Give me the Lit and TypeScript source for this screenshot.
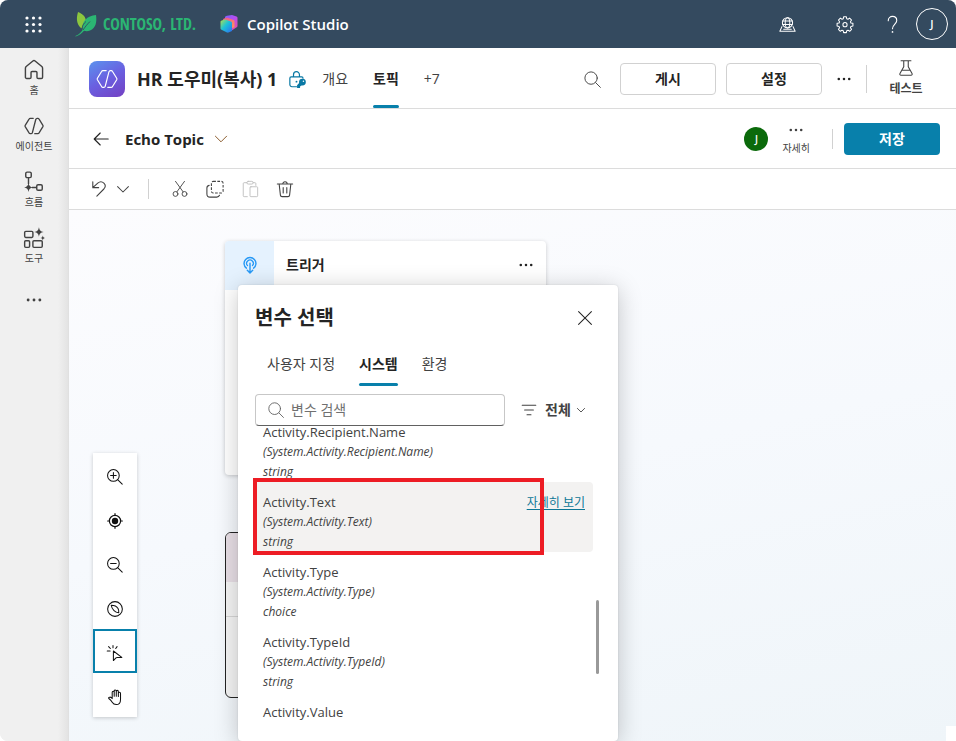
import { LitElement, html, css, svg } from "lit";
import { customElement, state } from "lit/decorators.js";
import { classMap } from "lit/directives/class-map.js";

const icon = (size: number, body: unknown) =>
  html`<svg width=${size} height=${size} viewBox="0 0 20 20" fill="none" stroke="currentColor" stroke-width="1" stroke-linecap="round" stroke-linejoin="round" aria-hidden="true">${body}</svg>`;

const dots = svg`<g fill="currentColor" stroke="none"><circle cx="3.500" cy="10" r="1.600"/><circle cx="10" cy="10" r="1.600"/><circle cx="16.500" cy="10" r="1.600"/></g>`;
const search = svg`<circle cx="8.5" cy="8.5" r="6.500"/><path d="M13.300 13.300l5 5"/>`;
const hexCode = svg`<path d="M9.3 3H6.6c-.5 0-.9.3-1.1.7L2 9.4c-.2.4-.2.8 0 1.2l3.5 5.7c.2.4.6.7 1.1.7h.7c.6 0 1-.3 1.2-.9l3.1-12c.2-.7.7-1.1 1.3-1.1h.6c.5 0 .9.3 1.1.7l3.5 5.7c.2.4.2.8 0 1.2l-3.5 5.7c-.2.4-.6.7-1.1.7h-2.8"/>`;

const icons = {
  home: svg`<path stroke-width="1.300" d="M2.2 8.3c0-.6.3-1.1.7-1.5l6.100-5c.6-.5 1.400-.5 2 0l6.100 5c.4.4.7.900.7 1.500v8.200c0 .7-.5 1.200-1.200 1.200h-2.700c-.7 0-1.200-.5-1.200-1.200v-4.200c0-.5-.4-.900-.900-.900H8.200c-.5 0-.900.4-.900.900v4.200c0 .7-.5 1.200-1.200 1.200H3.400c-.7 0-1.200-.5-1.200-1.200z"/>`,
  agent: svg`<g stroke-width="1.200">${hexCode}</g>`,
  flow: svg`<g stroke-width="1.300"><rect x="2.500" y="1" width="5" height="5" rx="1.200"/><rect x="12.500" y="12.500" width="5" height="5" rx="1.200"/><path d="M5 6.500v5M8.500 15h3.500"/></g><path fill="currentColor" stroke="none" d="M5 11c.5 2.600 1.400 3.500 4 4-2.600.5-3.500 1.400-4 4-.5-2.600-1.400-3.500-4-4 2.600-.5 3.500-1.400 4-4z"/>`,
  tools: svg`<g stroke-width="1.300"><rect x="1.500" y="4" width="7.500" height="5.500" rx="1"/><rect x="1.500" y="12.500" width="4.500" height="6" rx="1"/><rect x="9" y="12.500" width="8.500" height="6" rx="1"/></g><g fill="currentColor" stroke="none"><path d="M14.500.2c.6 3 1.300 3.700 4.300 4.300-3 .6-3.700 1.300-4.300 4.300-.6-3-1.300-3.700-4.300-4.300 3-.6 3.700-1.300 4.300-4.300z"/><path d="M18 7.800c.3 1.500.7 1.900 2.200 2.200-1.500.3-1.900.7-2.200 2.200-.3-1.500-.7-1.900-2.200-2.200 1.500-.3 1.900-.7 2.200-2.200z"/></g>`,
  back: svg`<path stroke-width="1.400" d="M19 10H1.500M9 2.500L1.500 10 9 17.500"/>`,
  undo: svg`<path stroke-width="1.200" d="M2 2v6.500h6.500M2.300 8.200L7.500 3.500c2-1.700 5-1.700 6.800 0s1.800 4.500 0 6.500L6.500 18"/>`,
  cut: svg`<circle cx="5" cy="15.500" r="2.700"/><circle cx="15" cy="15.500" r="2.700"/><path d="M5 1.500l8.500 11.700M15 1.500L6.500 13.200"/>`,
  copy: svg`<path stroke-width="1.200" stroke-dasharray="3 1.600" stroke-linecap="butt" d="M8 1.500h9a2 2 0 0 1 2 2v9a2 2 0 0 1-2 2H8a2 2 0 0 1-2-2v-9a2 2 0 0 1 2-2z"/><path stroke-width="1.200" d="M3.500 6C2 6.300 1 7.200 1 9v6.500c0 2 1.200 3.500 3.500 3.500H12c1.500 0 2.500-.8 3-2"/>`,
  paste: svg`<path d="M6.500 3H3.500a1 1 0 0 0-1 1v13.500a1 1 0 0 0 1 1H7M13.500 3h2a1 1 0 0 1 1 1v2"/><rect x="6.500" y="1.500" width="7" height="3" rx="1.500"/><rect x="10" y="7.500" width="8.500" height="11" rx="1"/>`,
  trash: svg`<path stroke-width="1.200" d="M1.500 4.500h17M7.500 4.500c0-3.500 5-3.500 5 0M3.500 4.500l1.400 12.300c.1 1 .8 1.700 1.800 1.700h6.600c1 0 1.700-.7 1.800-1.700L16.500 4.500M8 8.500v6M12 8.500v6"/>`,
  close: svg`<path stroke-width="1.300" d="M2 2l16 16M18 2L2 18"/>`,
  filter: svg`<path stroke-width="1.300" d="M1.500 4h17M4.500 10h11M7.500 16h5"/>`,
  flask: svg`<path stroke-width="1.200" d="M4.500 2h11M7.500 2v6.500L3.300 16.200c-.5 1 .1 1.800 1.100 1.800h11.200c1 0 1.600-.8 1.100-1.800L12.500 8.500V2M5.700 12.500h8.600"/>`,
  globe: svg`<g stroke-width="1.200"><circle cx="10" cy="8" r="6"/><ellipse cx="10" cy="8" rx="2.700" ry="6"/><path d="M4.400 6h11.200M4.400 10h11.200M3.500 12.500L1 18h18l-2.500-5.500M5.500 15.500h9"/></g>`,
  gear: svg`<path stroke-width="1.300" d="M8.300 1h3.400l.5 2.500 1.500.6 2.100-1.400 2.400 2.400-1.400 2.100.6 1.500 2.500.5v3.400l-2.500.5-.6 1.500 1.400 2.100-2.400 2.400-2.100-1.400-1.500.6-.5 2.500H8.300l-.5-2.500-1.500-.6-2.100 1.400-2.400-2.400 1.400-2.100-.6-1.500-2.500-.5V9.200l2.500-.5.6-1.500-1.400-2.100 2.400-2.400 2.100 1.400 1.500-.6z"/><circle cx="10" cy="10.800" r="2.600" stroke-width="1.300"/>`,
  help: svg`<path stroke-width="1.300" d="M5 5.500C5 2.500 7.200.5 10 .5s5 2 5 4.800c0 4-5 4.500-5 9.700"/><circle cx="10" cy="18.700" r="1" fill="currentColor" stroke="none"/>`,
  zoomIn: svg`<g stroke-width="1.300"><circle cx="8" cy="8" r="7.300"/><path d="M13.300 13.300l5.700 5.700M4.500 8h7M8 4.500v7"/></g>`,
  zoomOut: svg`<g stroke-width="1.300"><circle cx="8" cy="8" r="7.300"/><path d="M13.300 13.300l5.700 5.700M4.500 8h7"/></g>`,
  target: svg`<circle cx="10" cy="10" r="7" stroke-width="1.500"/><circle cx="10" cy="10" r="4" fill="currentColor" stroke="none"/><path stroke-width="1.500" d="M10 .8v2M10 17.200v2M.8 10h2M17.200 10h2"/>`,
  compass: svg`<circle cx="10" cy="10" r="9.200" stroke-width="1.300"/><path stroke-width="1.300" d="M5.300 5.300c3.700 0 7 1.500 8.500 4 .9 1.500 1.100 3.200.9 5.400-2.300-.2-4.200-.9-5.900-2.700-2-2-3.200-4.200-3.500-6.700z"/>`,
  click: svg`<path stroke-width="1.300" d="M8 7.500v12l3.200-3.400 1.500-.6h5.800zM7.500 .5v3M2 2l2.200 2.400M.3 7.500h3.600M12.600 2l-1.700 2.400"/>`,
  hand: svg`<path stroke-width="1.300" d="M6.500 12V4.200c0-1.700 2.500-1.700 2.500 0V9M9 9V2.500c0-1.700 2.600-1.700 2.600 0V9M11.600 9V3c0-1.700 2.600-1.700 2.600 0v6.500M14.200 9.500V5.300c0-1.700 2.700-1.700 2.700 0V13c0 3.700-2 6.500-5.400 6.500-2.400 0-3.800-.9-5-3-1-1.700-2.200-3-3.900-4.300-.9-.7-.7-1.800.5-2 1.500-.3 2.500.300 3.400 1.800"/>`,
  trigger: svg`<path stroke-width="1.600" d="M6 13.500A6.600 6.600 0 1 1 14 13.500"/><path stroke-width="1.400" d="M7.300 10.700A3.700 3.700 0 1 1 12.700 10.700"/><path stroke-width="1.600" d="M10 8v10.500M7 15.800L10 18.800l3-3"/>`,
  lock: svg`<g stroke-width="1.400"><path d="M9 18.500H3.500a2.500 2.500 0 0 1-2.500-2.500V8.500A1.500 1.500 0 0 1 2.500 7h12.500A1.500 1.500 0 0 1 16.500 8.500M5.300 7V4.300a3.500 3.500 0 0 1 7 0V7"/></g><g fill="currentColor" stroke="none"><circle cx="8.800" cy="12.500" r="1.100"/><circle cx="15.800" cy="13" r="4"/><path d="M13 13l3 3-3 2.300v1.700H9.500v-3.300z"/></g><circle cx="17" cy="12" r=".9" fill="#fff" stroke="none"/>`,
};

const variables: { name: string; type?: string }[] = [
  { name: "Activity.Recipient.Name", type: "string" },
  { name: "Activity.Text", type: "string" },
  { name: "Activity.Type", type: "choice" },
  { name: "Activity.TypeId", type: "string" },
  { name: "Activity.Value" },
];

const base = css`
  * { box-sizing: border-box; }
  svg { display: block; flex: none; overflow: visible; }
  button { font: inherit; color: inherit; background: none; border: 0; padding: 0; margin: 0; cursor: pointer; }
`;

@customElement("variable-picker")
class VariablePicker extends LitElement {
  @state() private tab = "시스템";

  static styles = [base, css`
    :host { display: flex; flex-direction: column; background: #fff; border-radius: 4px; padding: 17px 17px 19px; box-shadow: 0 4px 24px rgba(0, 0, 0, .22), 0 0 2px rgba(0, 0, 0, .12); }
    .head { display: flex; align-items: center; justify-content: space-between; height: 32px; }
    h2 { margin: 0; font-size: 20px; line-height: 32px; font-weight: 700; color: #242424; }
    .close { padding: 8px; }
    .tabs { display: flex; margin-top: 8px; height: 44px; }
    .tab { position: relative; padding: 0 12px; color: #424242; line-height: 44px; }
    .tab.on { font-weight: 700; color: #242424; }
    .tab.on::after { content: ""; position: absolute; left: 12px; right: 12px; bottom: 0; height: 3px; border-radius: 2px; background: #0880ab; }
    .row { display: flex; align-items: center; margin-top: 8px; }
    .search { display: flex; align-items: center; gap: 6px; width: 250px; height: 32px; padding: 0 11px; border: 1px solid #c7c7c7; border-bottom-color: #616161; border-radius: 4px; color: #616161; }
    input { flex: 1; min-width: 0; border: 0; outline: 0; padding: 0; background: none; font: inherit; color: inherit; }
    input::placeholder { color: #707070; opacity: 1; }
    .filter { display: flex; align-items: center; gap: 8px; margin-left: 16px; font-weight: 700; color: #424242; }
    .filter span { margin-right: -2px; }
    .list { flex: 1; min-height: 0; margin-top: 1px; overflow-y: auto; scrollbar-width: none; }
    .item { position: relative; width: 338px; height: 70px; padding: 10px 8px 0; border-radius: 4px; color: #424242; }
    .item.on { background: #f3f2f1; }
    .pick { display: block; width: 100%; text-align: left; font-size: 13px; line-height: 20px; }
    .pick span, .pick em { display: block; }
    .pick em { font-size: 12px; }
    .more { position: absolute; right: 8px; top: 10px; font-size: 12px; line-height: 22px; color: #0c7796; text-underline-offset: 2px; }
    .thumb { position: absolute; right: 19px; top: 315px; width: 3px; height: 74px; border-radius: 2px; background: #999; }
    .mark { position: absolute; left: 15px; top: 193px; width: 291px; height: 77px; border: 4px solid #ed1c24; pointer-events: none; }
  `];

  firstUpdated() {
    this.renderRoot.querySelector(".list")!.scrollTop = 15;
  }

  render() {
    return html`
      <div class="head"><h2>변수 선택</h2><button class="close" aria-label="닫기">${icon(16, icons.close)}</button></div>
      <div class="tabs" role="tablist">
        ${["사용자 지정", "시스템", "환경"].map((t) => html`<button role="tab" aria-selected=${t === this.tab} class=${classMap({ tab: true, on: t === this.tab })} @click=${() => (this.tab = t)}>${t}</button>`)}
      </div>
      <div class="row">
        <label class="search">${icon(18, search)}<input type="text" aria-label="변수 검색" placeholder="변수 검색"></label>
        <button class="filter">${icon(16, icons.filter)}<span>전체</span>${icon(8, svg`<path stroke-width="2.200" d="M1 6l9 9 9-9"/>`)}</button>
      </div>
      <div class="list">
        ${variables.map((v) => {
          const on = v.name === "Activity.Text";
          return html`<div class=${classMap({ item: true, on })}>
            <button class="pick"><span>${v.name}</span>${v.type ? html`<em>(System.${v.name})</em><em>${v.type}</em>` : ""}</button>
            ${on ? html`<a class="more" href="#">자세히 보기</a>` : ""}
          </div>`;
        })}
      </div>
      <div class="thumb"></div>
      <div class="mark"></div>`;
  }
}

@customElement("app-root")
class AppRoot extends LitElement {
  static styles = [base, css`
    :host { display: flex; flex-direction: column; height: 100vh; min-height: 600px; overflow: hidden; background: #f0f0f0; color: #242424; font: 14px/20px "Open Sans", "Noto Sans CJK KR", sans-serif; border-radius: 8px 8px 0 8px; }
    .top { display: flex; align-items: center; height: 48px; padding: 0 8px 0 25px; background: #344a5f; color: #fff; flex: none; }
    .brand { display: flex; align-items: center; gap: 6px; margin-left: 33px; width: 120px; color: #2bb673; font: 700 16px/20px "Liberation Sans Narrow", "Open Sans Condensed", "Roboto Condensed", "Lato", sans-serif; white-space: nowrap; }
    .product { display: flex; align-items: center; gap: 9px; margin-left: 25px; font-size: 15px; font-weight: 600; white-space: nowrap; }
    .tray { display: flex; align-items: center; margin-left: auto; }
    .tray button { display: grid; place-items: center; width: 40px; height: 40px; }
    .tray .gear { margin-left: 18px; }
    .tray .help { margin-left: 7px; }
    .tray .me { width: 32px; height: 32px; margin-left: 4px; border: 1px solid #fff; border-radius: 50%; font-size: 11px; font-weight: 600; }
    .body { display: flex; flex: 1; min-height: 0; }
    nav { width: 68px; flex: none; padding-top: 5px; color: #424242; background: linear-gradient(90deg, #f0f0f0 58px, #e3e3e3); }
    nav button { display: flex; flex-direction: column; align-items: center; width: 68px; height: 56px; padding-top: 5px; font-size: 10px; line-height: 16px; }
    nav button .ic { display: grid; place-items: center; height: 24px; }
    nav .overflow { padding-top: 11px; }
    .main { display: flex; flex-direction: column; flex: 1; min-width: 0; background: #fff; border-left: 1px solid #e0e0e0; }
    .bar { display: flex; align-items: center; border-bottom: 1px solid #dcdcdc; flex: none; }
    .b1 { height: 61px; padding: 2px 27px 0 20px; }
    .logo { display: grid; place-items: center; width: 36px; height: 36px; border-radius: 8px; color: #fff; background: linear-gradient(150deg, #5b93ee, #6a5fe0 50%, #7440c2); }
    h1 { margin: 0 12px; font-size: 18px; line-height: 28px; font-weight: 700; white-space: nowrap; }
    .lock { color: #0878a4; }
    .tab { position: relative; height: 58px; margin-left: 25px; line-height: 58px; color: #424242; white-space: nowrap; }
    .lock + .tab { margin-left: 16px; }
    .tab.on { font-weight: 700; color: #242424; }
    .tab.on::after { content: ""; position: absolute; left: 0; right: 0; bottom: 0; height: 3px; border-radius: 2px; background: #0880ab; }
    .push { margin-left: auto; }
    .out { width: 96px; height: 32px; margin-left: 10px; border: 1px solid #d1d1d1; border-radius: 4px; font-weight: 700; }
    .find { margin-right: 8px; color: #424242; }
    .dots { margin-left: 14px; }
    .rule { width: 1px; height: 28px; margin-left: 14px; background: #d1d1d1; }
    .test { display: flex; flex-direction: column; align-items: center; gap: 2px; width: 46px; margin-left: 16px; font-size: 12px; line-height: 20px; font-weight: 600; color: #424242; }
    .b2 { height: 60px; padding: 0 16px 0 24px; }
    .name { display: flex; align-items: center; gap: 10px; margin-left: 16px; font-size: 15px; font-weight: 700; white-space: nowrap; }
    .name svg { color: #8a5a2c; }
    .badge { display: grid; place-items: center; width: 24px; height: 24px; border-radius: 50%; background: #0b6a0b; color: #fff; font-size: 10px; font-weight: 600; }
    .detail { display: flex; flex-direction: column; align-items: center; gap: 2px; margin: 0 22px 0 14px; font-size: 10px; line-height: 16px; color: #424242; }
    .b2 .rule { height: 20px; margin: 0 11px 0 0; }
    .save { width: 96px; height: 32px; border-radius: 4px; background: #0880ab; color: #fff; font-weight: 700; }
    .b3 { height: 41px; padding: 0 24px 0 22px; color: #424242; }
    .b3 .rule { height: 20px; margin: 0 22px 0 19px; }
    .b3 .chev { margin-left: 8px; }
    .b3 .tool { margin-right: 17px; }
    .b3 .off { color: #bdbdbd; }
    .canvas { position: relative; flex: 1; min-height: 0; overflow: hidden; background: linear-gradient(168deg, #fcfcfe, #f6f9fd 50%, #eff5f9); }
    .node { position: absolute; left: 156px; width: 321px; background: #fff; border-radius: 4px; overflow: hidden; }
    .trigger { top: 31px; height: 234px; box-shadow: 0 1px 4px rgba(0, 0, 0, .2); }
    .nhead { display: flex; align-items: center; height: 49px; padding-right: 12px; border-bottom: 1px solid #e0e0e0; font-weight: 700; }
    .nicon { display: grid; place-items: center; width: 49px; height: 49px; margin-right: 12px; background: #e5f2fe; color: #2899f5; }
    .ask { top: 322px; height: 166px; border: 1px solid #242424; background: #f5f5f5; border-radius: 6px; }
    .ask .nhead { background: #e8dfe6; border: 0; }
    .sub { height: 35px; border-bottom: 1px solid #d6d6d6; }
    .tools { position: absolute; left: 24px; bottom: 24px; width: 44px; display: flex; flex-direction: column; background: #fff; box-shadow: 0 1px 4px rgba(0, 0, 0, .2); color: #111; }
    .tools button { display: grid; place-items: center; height: 44px; padding-top: 4px; }
    .tools .on { border: 2px solid #0880ab; }
    variable-picker { position: absolute; left: 169px; top: 75px; bottom: 0; width: 380px; }
    .grip { position: absolute; right: 0; bottom: 0; width: 10px; height: 15px; background: #fff; }
  `];

  render() {
    const nav: [unknown, string][] = [[icons.home, "홈"], [icons.agent, "에이전트"], [icons.flow, "흐름"], [icons.tools, "도구"]];
    const tools: [unknown, string][] = [[icons.zoomIn, "확대"], [icons.target, "가운데 맞춤"], [icons.zoomOut, "축소"], [icons.compass, "미니맵"], [icons.click, "선택"], [icons.hand, "이동"]];
    return html`
      <header class="top">
        <button aria-label="앱 시작 관리자"><svg width="17" height="17" viewBox="0 0 17 17" fill="#fff">${[2, 8.5, 15].map((y) => [2, 8.5, 15].map((x) => svg`<circle cx=${x} cy=${y} r="1.600"/>`))}</svg></button>
        <div class="brand">
          <svg width="22" height="25" viewBox="0 0 22 25"><path fill="#8cc63f" d="M3 0c5 2 8 5 8 9.500-2.500 2-3.500 4-4 7C2.500 14 .5 8 3 0z"/><path fill="#2bb673" d="M21 3c1 7 0 13-6 15.500-2 .8-4.500.8-6 .200C7 21 4 23.500.8 24.500c-.5 0-.5-.4 0-.7C4 22.500 6 20.500 7.500 18 6.500 9 12 4 21 3z"/><path fill="none" stroke="#344a5f" stroke-width=".9" d="M15 9.500c-3 3-5 5.500-7 8.500M11 9.500C8.500 11.500 7.200 14 7 17"/></svg>
          <span>CONTOSO, LTD.</span>
        </div>
        <div class="product">
          <svg width="18" height="18" viewBox="0 0 18 18"><defs>
            <linearGradient id="a" x1="0" y1="0" x2="1" y2="1"><stop stop-color="#7b61ff"/><stop offset=".5" stop-color="#b84df0"/><stop offset="1" stop-color="#f0508c"/></linearGradient>
            <linearGradient id="b" x1="0" y1="0" x2="1" y2="1"><stop stop-color="#f0508c"/><stop offset="1" stop-color="#ff9a5a"/></linearGradient>
            <linearGradient id="c" x1="0" y1="0" x2="1" y2="1"><stop stop-color="#b6e04a"/><stop offset=".45" stop-color="#1cc3d8"/><stop offset="1" stop-color="#2f6bf0"/></linearGradient></defs>
            <path fill="url(#a)" d="M7 .8 12 0l4.500 1.500c.6.200 1 .7 1 1.300V11c0 .6-.3 1-.8 1.300L11 16 5 11V2.500c0-1 1-1.500 2-1.700z"/>
            <path fill="url(#b)" d="M4 3.500 6 2.800c.6-.2 1-.2 1.500 0l6 2.200c.6.200 1 .7 1 1.300v6L9 14 3 9V5c0-.7.3-1.200 1-1.500z"/>
            <path fill="url(#c)" d="M.5 7c0-.8.5-1.300 1.300-1.600L4.500 4.500c.7-.2 1 0 1.600.2l4.700 1.800c.8.300 1.200.8 1.200 1.500v8L8.500 17.500c-.5.2-1 .2-1.500 0l-5.500-2.700c-.6-.3-1-.8-1-1.300z"/></svg>
          <span>Copilot Studio</span>
        </div>
        <div class="tray">
          <button aria-label="환경">${icon(17, icons.globe)}</button>
          <button class="gear" aria-label="설정">${icon(16, icons.gear)}</button>
          <button class="help" aria-label="도움말">${icon(17, icons.help)}</button>
          <button class="me">J</button>
        </div>
      </header>
      <div class="body">
        <nav>
          ${nav.map(([g, t]) => html`<button><span class="ic">${icon(22, g)}</span><span>${t}</span></button>`)}
          <button class="overflow" aria-label="더 보기"><span class="ic">${icon(18, dots)}</span></button>
        </nav>
        <div class="main">
          <div class="bar b1">
            <div class="logo">${icon(24, svg`<g stroke-width="1">${hexCode}</g>`)}</div>
            <h1>HR 도우미(복사) 1</h1>
            <span class="lock">${icon(17, icons.lock)}</span>
            <button class="tab">개요</button>
            <button class="tab on">토픽</button>
            <button class="tab">+7</button>
            <button class="find push" aria-label="검색">${icon(19, search)}</button>
            <button class="out">게시</button>
            <button class="out">설정</button>
            <button class="dots" aria-label="더 보기">${icon(16, dots)}</button>
            <span class="rule"></span>
            <button class="test">${icon(18, icons.flask)}<span>테스트</span></button>
          </div>
          <div class="bar b2">
            <button aria-label="뒤로">${icon(16, icons.back)}</button>
            <button class="name"><span>Echo Topic</span>${icon(14, svg`<path stroke-width="1.400" d="M2 6l8 8 8-8"/>`)}</button>
            <span class="badge push">J</span>
            <button class="detail">${icon(16, dots)}<span>자세히</span></button>
            <span class="rule"></span>
            <button class="save">저장</button>
          </div>
          <div class="bar b3">
            <button aria-label="실행 취소">${icon(18, icons.undo)}</button>
            <button class="chev" aria-label="실행 취소 옵션">${icon(12, svg`<path stroke-width="1.700" d="M1 6l9 9 9-9"/>`)}</button>
            <span class="rule"></span>
            <button class="tool" aria-label="잘라내기">${icon(18, icons.cut)}</button>
            <button class="tool" aria-label="복사">${icon(18, icons.copy)}</button>
            <button class="tool off" aria-label="붙여넣기">${icon(18, icons.paste)}</button>
            <button class="tool" aria-label="삭제">${icon(18, icons.trash)}</button>
          </div>
          <div class="canvas">
            <section class="node trigger">
              <div class="nhead"><span class="nicon">${icon(18, icons.trigger)}</span><span>트리거</span><button class="push" aria-label="더 보기">${icon(16, dots)}</button></div>
            </section>
            <section class="node ask"><div class="nhead"></div><div class="sub"></div></section>
            <div class="tools">
              ${tools.map(([g, t], i) => html`<button aria-label=${t} class=${classMap({ on: i === 4 })}>${icon(16, g)}</button>`)}
            </div>
            <variable-picker></variable-picker>
            <div class="grip"></div>
          </div>
        </div>
      </div>`;
  }
}
